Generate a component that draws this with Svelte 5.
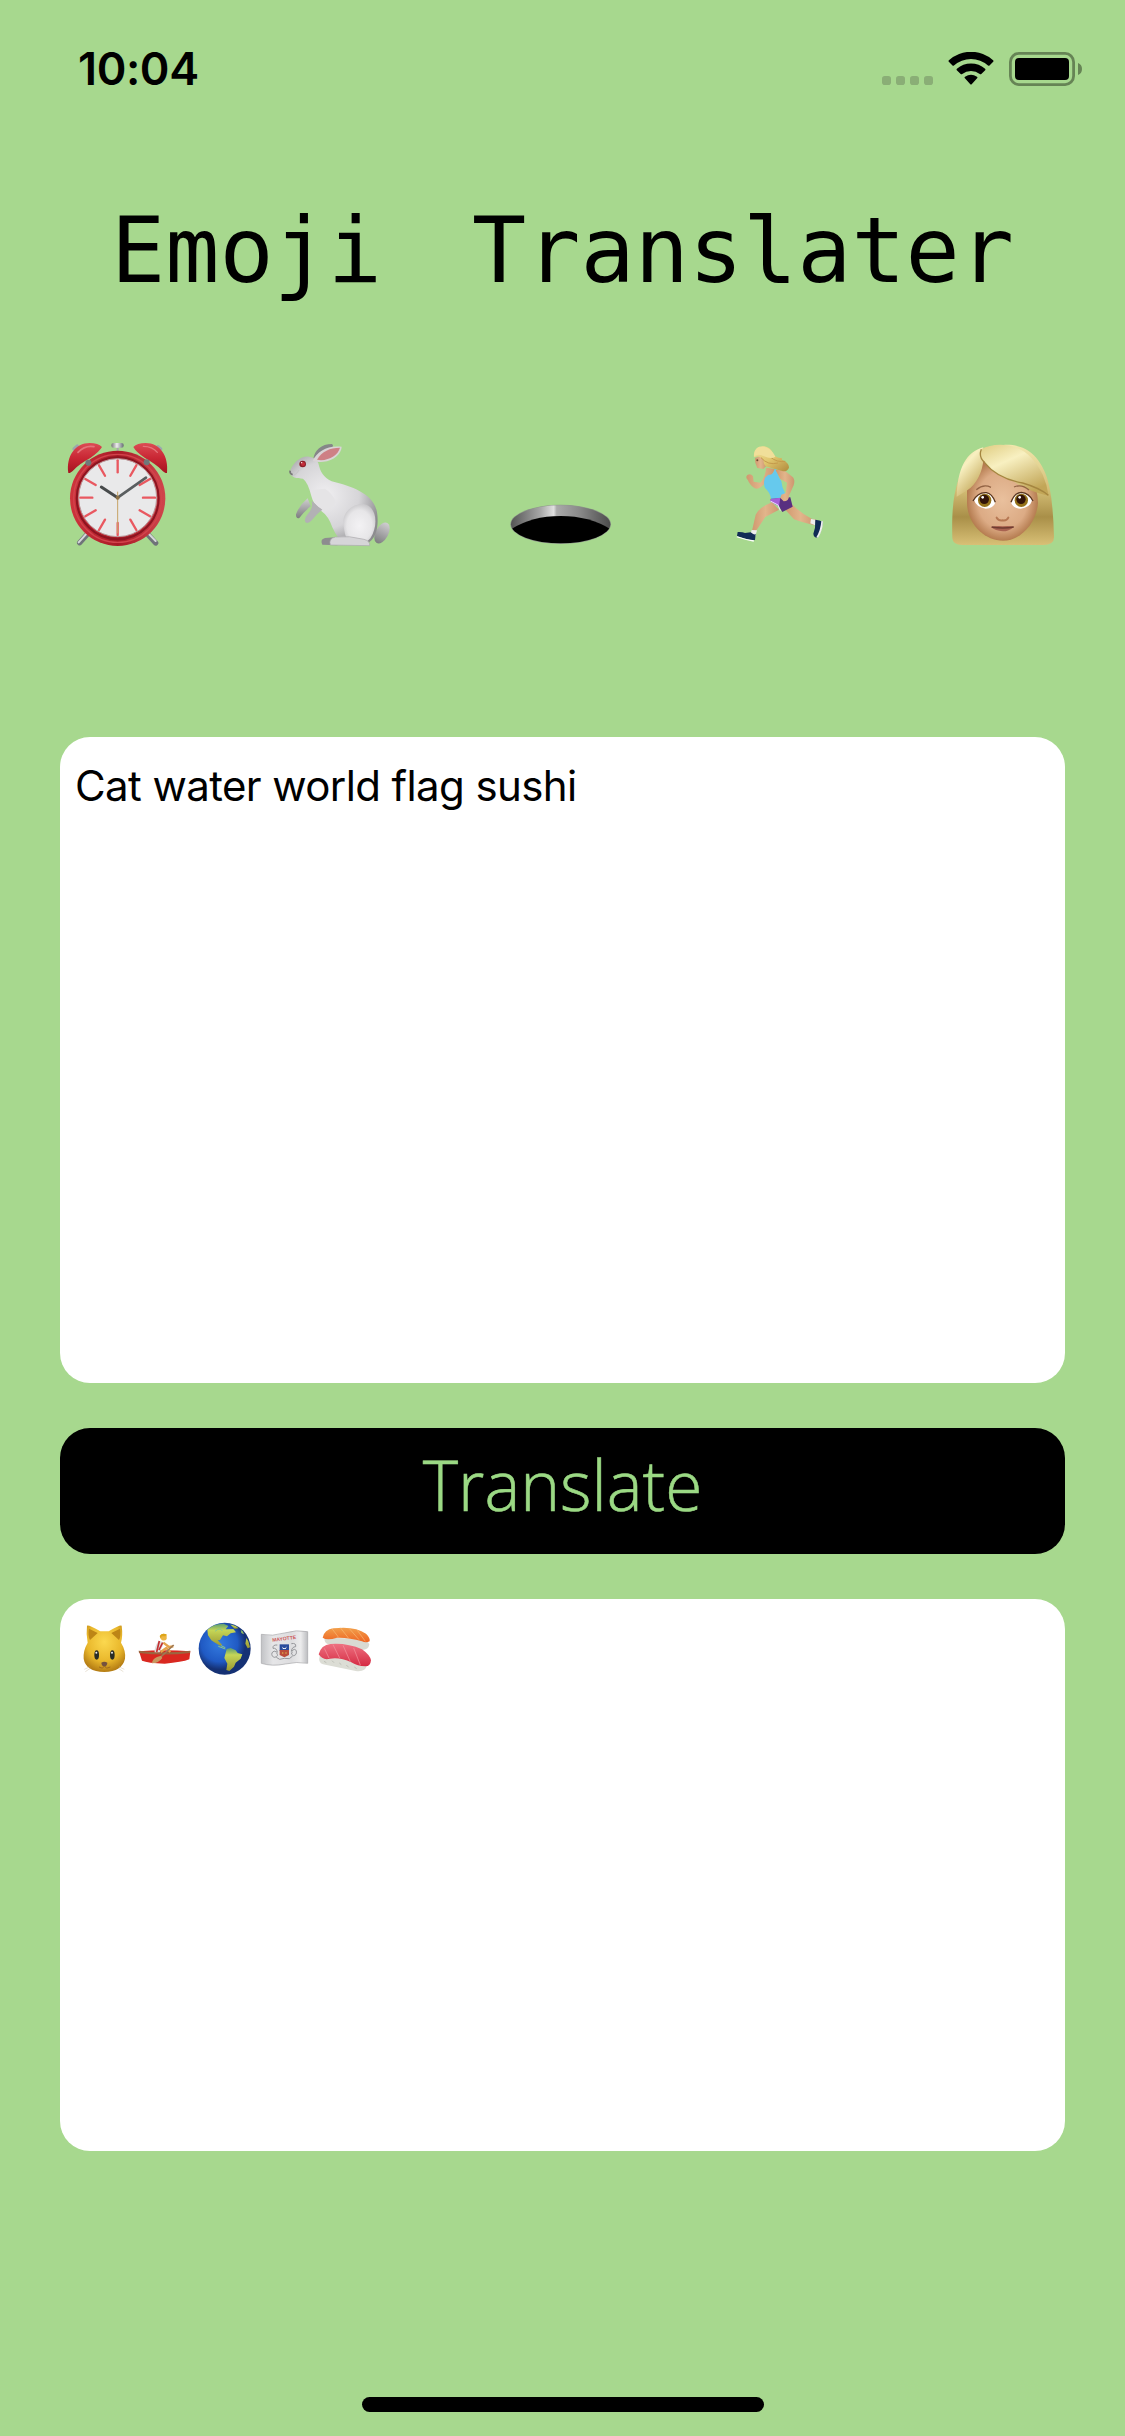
<script>
  let source = $state('Cat water world flag sushi');
  const ticks = [0, 30, 60, 90, 120, 150, 180, 210, 240, 270, 300, 330];
</script>

<main class="screen">
  <header class="status">
    <span class="time">10:04</span>
    <div class="indicators">
      <svg class="signal" viewBox="0 0 52 9">
        <rect x="0" width="9" height="9" rx="2.800" />
        <rect x="14" width="9" height="9" rx="2.800" />
        <rect x="28" width="9" height="9" rx="2.800" />
        <rect x="42" width="9" height="9" rx="2.800" />
      </svg>
      <svg class="wifi" viewBox="0 0 46 34.500" preserveAspectRatio="none">
        <path d="M.8 10.200Q0 9.400.9 8.600A32 32 0 0 1 45.100 8.600Q46 9.400 45.200 10.200L41.500 14Q40.800 14.700 40 14A25 25 0 0 0 6 14Q5.200 14.700 4.500 14Z" />
        <path d="M8.800 19Q8.100 18.200 8.900 17.500A21 21 0 0 1 37.100 17.500Q37.900 18.200 37.200 19L33.300 23Q32.600 23.600 31.800 23A14 14 0 0 0 14.200 23Q13.400 23.600 12.700 23Z" />
        <path d="M16.700 27.200Q16.200 26.500 17 26A10 10 0 0 1 29 26Q29.800 26.500 29.300 27.200L23.700 33.700Q23 34.400 22.300 33.700Z" />
      </svg>
      <svg class="battery" viewBox="0 0 74 34">
        <rect x="1.400" y="1.400" width="63.200" height="31.200" rx="8.500" fill="none" stroke="#668455" stroke-width="2.800" />
        <rect x="6" y="6" width="54" height="22" rx="4" />
        <path d="M69 11Q73 12.500 73 17T69 23Z" fill="#668455" />
      </svg>
    </div>
  </header>

  <h1>Emoji Translater</h1>

  <section class="hero" aria-label="Emoji">
    <!-- Alarm clock -->
    <svg viewBox="6 0 390 390">
      <defs>
        <linearGradient id="bell" x1="0" y1="0" x2="0" y2="1"><stop offset="0" stop-color="#dc4c54" /><stop offset=".5" stop-color="#c92734" /><stop offset="1" stop-color="#a51420" /></linearGradient>
        <linearGradient id="rim" x1="0" y1="0" x2="1" y2="0"><stop offset="0" stop-color="#cf343d" /><stop offset=".5" stop-color="#a91a26" /><stop offset="1" stop-color="#d0454c" /></linearGradient>
        <linearGradient id="steel"><stop offset="0" stop-color="#777" /><stop offset=".45" stop-color="#eee" /><stop offset="1" stop-color="#646b72" /></linearGradient>
      </defs>
      <path d="M118 306L89 338M287 306L317 339" stroke="#6f7479" stroke-width="16" stroke-linecap="round" />
      <path d="M114 306L86 337M291 306L317 333" stroke="#d5d8da" stroke-width="6" stroke-linecap="round" />
      <path d="M72 57L82 48M332 57L324 50" stroke="#9aa7ad" stroke-width="10" stroke-linecap="round" />
      <path d="M203 45V75" stroke="#aaa" stroke-width="6" />
      <rect x="184" y="39" width="37" height="14" rx="6" fill="url(#steel)" />
      <circle cx="203" cy="205" r="143" fill="url(#rim)" />
      <circle cx="203" cy="205" r="132" fill="none" stroke="#d2444c" stroke-width="4" />
      <circle cx="203" cy="205" r="123" fill="none" stroke="#8c1420" stroke-width="6" />
      <circle cx="203" cy="203" r="117" fill="#e9e9ea" stroke="#b99a9c" stroke-width="3" />
      <path d="M55 129C48 78 76 39 119 39Q145 39 156 51Q148 65 121 84Q88 102 72 119Q61 130 55 129Z" fill="url(#bell)" />
      <path d="M351 129C357 78 330 39 287 39Q261 39 250 51Q258 66 285 84Q318 103 334 119Q345 130 351 129Z" fill="url(#bell)" />
      <path d="M84 67Q105 45 132 50" stroke="#e4757a" stroke-width="5" fill="none" stroke-linecap="round" />
      <path d="M280 49Q307 49 322 67" stroke="#e4757a" stroke-width="4" fill="none" stroke-linecap="round" />
      <circle cx="115" cy="98" r="9" fill="#70777a" /><circle cx="290" cy="97" r="9" fill="#70777a" />
      {#each ticks as angle}
        <path d="M203 91V127" stroke="#e95860" stroke-width="7" stroke-linecap="round" transform="rotate({angle} 203 203)" />
      {/each}
      <path d="M203 203L154 171" stroke="#474a4b" stroke-width="9" stroke-linecap="round" />
      <path d="M203 203L288 143" stroke="#5a5e60" stroke-width="8" stroke-linecap="round" />
      <path d="M203 185V310" stroke="#c6a365" stroke-width="3" />
      <circle cx="203" cy="203" r="6" fill="#8c7045" />
    </svg>

    <!-- Rabbit -->
    <svg viewBox="-3 0 390 390">
      <defs>
        <radialGradient id="fur" cx=".4" cy=".45" r=".65"><stop offset="0" stop-color="#f0eff1" /><stop offset=".6" stop-color="#d6d5d8" /><stop offset="1" stop-color="#8d8c8f" /></radialGradient>
        <radialGradient id="haunch" cx=".5" cy=".55" r=".6"><stop offset="0" stop-color="#f3f2f4" /><stop offset=".65" stop-color="#e7e6e8" /><stop offset="1" stop-color="#c2c1c4" /></radialGradient>
        <linearGradient id="paw" x1="0" y1="0" x2="0" y2="1"><stop offset="0" stop-color="#d0cfd1" /><stop offset="1" stop-color="#7d7d7f" /></linearGradient>
      </defs>
      <ellipse cx="321" cy="309" rx="19" ry="34" transform="rotate(28 321 309)" fill="url(#paw)" />
      <path d="M115 88C118 60 139 42 171 42Q180 48 163 60L129 91Z" fill="#858688" />
      <path d="M98 205Q72 227 63 253Q62 267 73 264Q86 246 107 229Z" fill="url(#paw)" />
      <path d="M142 344Q134 328 150 324L190 321L187 346Z" fill="#8d8d8f" />
      <path d="M130 100C136 126 145 142 170 154C233 170 296 191 306 247C312 288 304 323 282 337H211C191 331 182 312 172 292Q161 258 138 242Q116 226 109 198Q99 157 84 146C67 146 46 143 45 126C51 102 75 77 102 80Q124 83 130 100Z" fill="url(#fur)" />
      <path d="M206 287C199 249 231 220 266 222C303 228 313 281 286 325L271 340L219 333C211 320 208 306 206 287Z" fill="url(#haunch)" />
      <path d="M166 345Q160 326 181 321Q223 316 267 328Q286 333 284 347Z" fill="#d6d5d8" stroke="#aaa9ac" stroke-width="2" />
      <path d="M110 212Q116 234 99 251Q86 265 91 276Q99 284 111 270Q130 247 142 239" fill="#b2b1b4" />
      <path d="M108 180Q114 229 145 238Q177 241 182 215Q173 190 150 176Z" fill="#e5e4e6" />
      <path d="M113 93C127 62 159 45 200 50C200 70 176 93 145 95Q122 97 113 93Z" fill="#d9d4d6" />
      <path d="M126 89C141 64 164 53 195 53C189 75 166 88 138 91Z" fill="#ce8085" />
      <circle cx="83" cy="102" r="10" fill="#8c2029" /><circle cx="84" cy="102" r="6" fill="#c52e3b" /><circle cx="80" cy="98" r="2" fill="#fff" />
      <path d="M45 122Q44 132 53 134" stroke="#777" stroke-width="5" fill="none" />
      <path d="M55 137Q67 131 72 120" stroke="#c1bfc2" stroke-width="2" fill="none" />
    </svg>

    <!-- Hole -->
    <svg viewBox="-12 0 390 390">
      <defs>
        <linearGradient id="ring"><stop offset="0" stop-color="#555" /><stop offset=".3" stop-color="#a8a8a8" /><stop offset=".43" stop-color="#e0e0e0" /><stop offset=".46" stop-color="#aaa" /><stop offset=".7" stop-color="#888" /><stop offset="1" stop-color="#4c4c4c" /></linearGradient>
        <clipPath id="opening"><ellipse cx="182" cy="283" rx="149" ry="57" /></clipPath>
      </defs>
      <ellipse cx="182" cy="283" rx="151" ry="59" fill="#8e9989" />
      <ellipse cx="182" cy="283" rx="149" ry="57" fill="url(#ring)" />
      <path d="M25 303Q90 258 182 258T340 303V350H25Z" clip-path="url(#opening)" />
    </svg>

    <!-- Runner -->
    <svg viewBox="-6 0 390 390">
      <defs>
        <linearGradient id="hair" x1="0" y1="0" x2="1" y2="1"><stop offset="0" stop-color="#f4e5a0" /><stop offset=".5" stop-color="#e0c56d" /><stop offset="1" stop-color="#b08a3c" /></linearGradient>
        <linearGradient id="skin"><stop offset="0" stop-color="#d0986f" /><stop offset=".5" stop-color="#e2b58b" /><stop offset="1" stop-color="#cd966f" /></linearGradient>
      </defs>
      <path d="M139 113Q134 145 121 158L101 155L99 139Q92 129 82 135Q75 142 84 151Q88 164 103 174Q112 179 123 171L147 149L166 117Z" fill="url(#skin)" />
      <path d="M105 84L106 98L112 114L130 117L139 108L131 74Z" fill="url(#skin)" />
      <path d="M156 217Q116 233 107 254L96 302L106 306L136 261L177 239Z" fill="url(#skin)" />
      <path d="M194 237L215 222Q240 248 275 266L289 269L283 286Q240 275 222 268Z" fill="url(#skin)" />
      <path d="M95 300L111 301L106 319L91 313Z" fill="#eee" />
      <path d="M273 267L287 269L285 286L271 280Z" fill="#eee" />
      <path d="M53 306Q67 305 75 309L92 307Q103 317 107 311L105 330Q91 333 51 318Z" fill="#122d56" />
      <path d="M51 319Q75 328 102 331L101 335Q74 330 50 322Z" fill="#fff" />
      <path d="M286 269Q299 271 308 275Q306 303 292 323Q281 323 280 311L285 293Z" fill="#102b55" />
      <path d="M304 273L309 274Q308 304 294 323L289 322Q302 300 304 273Z" fill="#eee" />
      <path d="M153 205L211 202L218 230L187 246L177 229L151 214Z" fill="#583080" />
      <path d="M153 206L181 203L177 229L151 214Z" fill="#a55fda" />
      <path d="M151 213L174 225L181 242" stroke="#f4dbff" stroke-width="3" fill="none" />
      <path d="M145 134Q160 136 164 116L172 120Q173 139 184 153Q185 173 196 191L193 202L153 206Q150 187 135 174Q129 160 135 143Z" fill="#66c9ed" />
      <path d="M167 121Q178 114 198 125L219 142Q226 151 221 166L207 197Q207 214 191 214L181 204L184 194L197 189L201 158L181 147Z" fill="url(#skin)" />
      <path d="M102 82C99 57 116 45 138 50C155 53 159 74 166 79Q177 87 187 83Q180 90 194 93Q207 101 207 113Q202 125 189 124Q160 116 137 109Q129 100 131 91Q121 75 102 82Z" fill="url(#hair)" />
      <path d="M123 83Q144 107 174 99M151 81Q170 98 196 94" stroke="#c59b4c" stroke-width="3" fill="none" />
      <path d="M102 79Q115 69 132 79Q153 88 166 80C151 44 106 37 102 79Z" fill="#f0df9a" />
      <circle cx="112" cy="91" r="3" fill="#70442f" />
    </svg>

    <!-- Woman's face -->
    <svg viewBox="15 0 390 390">
      <defs>
        <linearGradient id="mane" x1="0" y1="0" x2="0" y2="1"><stop offset="0" stop-color="#f2e7ad" /><stop offset=".45" stop-color="#d3bd75" /><stop offset=".72" stop-color="#a98f48" /><stop offset="1" stop-color="#d8c076" /></linearGradient>
        <radialGradient id="face"><stop offset="0" stop-color="#e9c09d" /><stop offset=".7" stop-color="#dcab85" /><stop offset="1" stop-color="#b57c50" /></radialGradient>
        <linearGradient id="fringe" x1="0" y1="0" x2=".6" y2="1"><stop offset="0" stop-color="#dfcc81" /><stop offset=".4" stop-color="#f8f0c1" /><stop offset="1" stop-color="#c2a657" /></linearGradient>
      </defs>
      <path d="M205 45C286 39 329 98 344 174Q355 231 357 322Q357 345 325 345H82Q53 345 52 324C50 249 54 198 69 153C90 84 139 43 205 45Z" fill="url(#mane)" />
      <path d="M96 180Q98 119 151 89H248Q306 137 309 218C306 275 260 332 204 332C147 332 97 281 96 218Z" fill="url(#face)" />
      <path d="M145 52C95 65 68 112 65 200Q82 190 98 180C123 164 144 126 145 87Q136 75 145 52Z" fill="url(#fringe)" />
      <path d="M139 58C178 36 249 38 290 85Q330 126 341 198Q270 181 236 154Q171 134 144 88Q134 73 139 58Z" fill="url(#fringe)" />
      <path d="M139 58Q130 80 148 97Q187 146 263 159Q317 175 340 196" stroke="#a58640" stroke-width="4" fill="none" />
      <path d="M124 179Q145 161 168 172M237 171Q260 161 282 180" stroke="#926344" stroke-width="4" fill="none" />
      <path d="M117 210Q131 189 151 189Q171 190 181 218Q175 235 152 236Q124 232 117 210Z" fill="#fff" />
      <path d="M228 218Q236 190 257 189Q281 190 292 210Q284 234 257 236Q236 236 228 218Z" fill="#fff" />
      <g fill="#94721a"><circle cx="149" cy="211" r="20" /><circle cx="259" cy="211" r="20" /></g>
      <g fill="#321409"><circle cx="148" cy="208" r="14" /><circle cx="258" cy="208" r="14" /></g>
      <g fill="#fff"><circle cx="143" cy="202" r="4" /><circle cx="254" cy="202" r="4" /></g>
      <path d="M114 213Q129 186 154 188Q171 190 181 217M228 217Q238 188 259 187Q282 189 294 213" stroke="#58351f" stroke-width="4" fill="none" />
      <path d="M185 263Q191 273 203 271Q215 273 220 263" stroke="#b67853" stroke-width="6" fill="none" stroke-linecap="round" />
      <path d="M168 291Q187 286 203 289Q220 286 238 290Q221 304 203 304Q181 302 168 291Z" fill="#a86250" />
      <path d="M170 291Q204 297 236 291" stroke="#703c31" stroke-width="4" fill="none" />
    </svg>
  </section>

  <textarea class="panel input" bind:value={source} spellcheck="false" aria-label="Text to translate"></textarea>
  <button type="button"><span>Translate</span></button>

  <section class="panel output" aria-label="Translation">
    <!-- Cat face -->
    <svg viewBox="75 90 180 180">
      <defs><radialGradient id="cat" cx=".5" cy=".35" r=".65"><stop offset="0" stop-color="#fbd84f" /><stop offset=".65" stop-color="#e9b72b" /><stop offset="1" stop-color="#b57d14" /></radialGradient></defs>
      <path d="M111 107Q115 103 151 124H176Q211 103 215 107Q219 137 213 158Q228 182 225 206Q217 244 163 246Q107 244 101 206Q99 182 113 158Q108 131 111 107Z" fill="url(#cat)" />
      <path d="M117 116Q113 137 120 150L143 129ZM210 116Q214 137 207 150L184 129Z" fill="#bd8516" />
      <ellipse cx="140" cy="195" rx="7" ry="14" fill="#292c26" /><ellipse cx="187" cy="195" rx="7" ry="14" fill="#292c26" />
      <circle cx="139" cy="188" r="3" fill="#eee" /><circle cx="186" cy="188" r="3" fill="#eee" />
      <path d="M154 218Q163 213 172 218Q171 229 163 230Q155 228 154 218Z" fill="#75523e" />
      <path d="M147 231Q158 239 163 229Q169 239 181 231" stroke="#a26d1e" stroke-width="3" fill="none" />
      <path d="M118 231L103 238M121 235L106 245M208 231L223 238M205 235L220 245" stroke="#ddd3c1" stroke-width="2" />
    </svg>

    <!-- Rowing boat -->
    <svg viewBox="255 90 180 180">
      <path d="M267 184Q343 177 421 184L418 208Q396 217 344 221Q293 219 276 212Z" fill="#d92820" />
      <path d="M266 182Q345 192 421 182L420 189Q342 198 267 189Z" fill="#9c653f" />
      <path d="M326 152L341 157L337 170L329 187H314Q312 171 326 152Z" fill="#ddd" />
      <path d="M328 153L320 186M338 158L327 180" stroke="#c32f31" stroke-width="5" />
      <path d="M340 158L357 171L370 169M332 186L349 174L361 186" stroke="#e4a24b" stroke-width="7" fill="none" stroke-linejoin="round" />
      <path d="M331 137Q338 128 350 134L350 147Q344 155 334 149Z" fill="#edb643" />
      <path d="M329 138Q335 127 350 133L346 139H335L332 147Z" fill="#dda519" />
      <path d="M371 165L329 204" stroke="#9e7954" stroke-width="5" />
      <path d="M333 197L337 204Q324 221 306 220Q306 208 321 201Z" fill="#c99760" />
    </svg>

    <!-- Globe -->
    <svg viewBox="435 90 180 180">
      <defs>
        <radialGradient id="ocean" cx=".4" cy=".4"><stop offset="0" stop-color="#347ce0" /><stop offset=".7" stop-color="#205ac4" /><stop offset="1" stop-color="#153174" /></radialGradient>
        <linearGradient id="land" x1="0" y1="0" x2="0" y2="1"><stop offset="0" stop-color="#5b9c72" /><stop offset=".3" stop-color="#c5d657" /><stop offset="1" stop-color="#9c9931" /></linearGradient>
      </defs>
      <circle cx="524" cy="176" r="78" fill="url(#ocean)" />
      <g fill="url(#land)">
        <path d="M472 119Q491 100 521 101L535 108L527 118L550 117L558 127L542 130L531 139L519 136L510 150L503 151L516 164L512 168L493 157L484 151L474 136Z" />
        <path d="M530 177L542 174L557 181L563 189L577 193L572 206L557 218L552 230L538 243L529 240L532 221L523 204Z" />
        <path d="M589 144L595 154L600 172L593 175L586 161ZM572 119L578 123L582 133L574 129Z" />
        <path d="M540 103L557 108L566 115L554 116Z" />
      </g>
      <path d="M495 124Q510 111 517 123M513 167L526 173M505 169L526 177" stroke="#8bc68a" stroke-width="3" fill="none" />
    </svg>

    <!-- Mayotte flag -->
    <svg viewBox="615 90 180 180">
      <defs><linearGradient id="cloth"><stop offset="0" stop-color="#c2c3c6" /><stop offset=".25" stop-color="#e6e6e8" /><stop offset=".65" stop-color="#dddddf" /><stop offset=".85" stop-color="#ececed" /><stop offset="1" stop-color="#bcbdc0" /></linearGradient></defs>
      <path d="M634 133Q667 140 703 129Q739 118 773 125V220Q740 214 706 222Q666 230 634 220Z" fill="url(#cloth)" stroke="#a4a5a8" stroke-width="2" />
      <text x="703" y="151" class="flag-name" text-anchor="middle" transform="rotate(-7 703 151)">MAYOTTE</text>
      <path d="M689 163H717V183H689Z" fill="#284b9b" /><path d="M689 180H717V195L703 202L689 195Z" fill="#bb4c39" />
      <path d="M695 169Q703 181 711 169L707 177H699Z" fill="#fff" />
      <path d="M696 189H700M706 189H710" stroke="#d7a74a" stroke-width="4" />
      <path d="M682 165Q667 164 669 175Q680 173 682 187Q671 179 666 188Q663 200 674 202Q687 199 680 189M724 161Q739 158 737 170Q726 170 724 184Q735 173 739 183Q741 196 730 197Q720 193 727 185M679 202L689 208L703 205L718 206L728 198" fill="none" stroke="#96979b" stroke-width="3" />
    </svg>

    <!-- Sushi -->
    <svg viewBox="795 90 180 180">
      <defs>
        <linearGradient id="salmon" x1="0" y1="0" x2="0" y2="1"><stop offset="0" stop-color="#f2a04b" /><stop offset="1" stop-color="#ee6423" /></linearGradient>
        <linearGradient id="tuna" x1="0" y1="0" x2="0" y2="1"><stop offset="0" stop-color="#ee7181" /><stop offset="1" stop-color="#d52b43" /></linearGradient>
      </defs>
      <path d="M823 143Q823 165 844 163L936 180Q956 180 958 163L947 146Z" fill="#d9dad2" />
      <path d="M818 143Q823 119 850 115Q915 107 948 131Q961 143 959 154Q948 160 936 154Q897 142 861 143Q831 153 818 143Z" fill="url(#salmon)" />
      <path d="M846 116L865 141M871 113L896 145M899 117L927 149M922 121L946 154" stroke="#f8ba77" stroke-width="2" />
      <path d="M809 198Q803 218 819 223L917 243Q946 247 951 226L942 211L850 193Z" fill="#dcddd5" />
      <path d="M806 193Q814 164 841 162Q891 158 936 178Q960 195 963 211Q961 230 946 229Q923 229 904 217Q870 201 840 206Q818 212 806 193Z" fill="url(#tuna)" />
      <path d="M823 175L837 204M849 164L869 204M879 166L901 215M911 174L931 225" stroke="#f397a0" stroke-width="2" />
      <path d="M822 214L829 218M846 212L852 218M868 219L874 224M889 225L896 232M913 231L920 236" stroke="#bfc0b7" stroke-width="3" />
    </svg>
  </section>

  <div class="home"></div>
</main>

<style>
  :global(body) { background: #a7d88e; }
  .screen {
    box-sizing: border-box;
    width: 1125px;
    height: 2436px;
    display: flex;
    flex-direction: column;
    background: #a7d88e;
    font-family: Inter, "Liberation Sans", sans-serif;
    color: #000;
    overflow: hidden;
  }
  svg { display: block; flex: none; }
  .status {
    flex: none;
    height: 146px;
    box-sizing: border-box;
    padding: 52px 42px 0 78px;
    display: flex;
    justify-content: space-between;
    align-items: flex-start;
  }
  .time { font-size: 45px; line-height: 34px; font-weight: 600; letter-spacing: -.4px; }
  .indicators { display: flex; height: 34px; }
  .signal { width: 52px; height: 9px; fill: #8aae76; margin: 24px 14px 0 0; }
  .wifi { width: 46px; height: 33px; margin-right: 15px; }
  .battery { width: 74px; height: 34px; }
  h1 {
    flex: none;
    margin: 0;
    height: 210px;
    text-align: center;
    font: 400 90px/210px "DejaVu Sans Mono", monospace;
    word-spacing: 36px;
    white-space: nowrap;
  }
  .hero {
    flex: none;
    box-sizing: border-box;
    height: 381px;
    padding: 74px 0 0 52px;
    display: flex;
    gap: 92px;
  }
  .hero svg { width: 130px; height: 130px; }
  .panel { flex: none; box-sizing: border-box; margin: 0 60px; background: #fff; border-radius: 30px; }
  .input {
    height: 646px;
    border: 0;
    padding: 24px 15px;
    resize: none;
    outline: none;
    font: 400 42px/50px Inter, "Liberation Sans", sans-serif;
    letter-spacing: -.6px;
    color: #000;
  }
  button {
    flex: none;
    height: 126px;
    margin: 45px 60px;
    padding: 0 0 14px;
    border: 0;
    border-radius: 30px;
    background: #000;
    color: #9bd984;
    font: 300 70px/112px "Open Sans", "Noto Sans", sans-serif;
    -webkit-text-stroke: .6px #9bd984;
  }
  button span { display: block; transform: scaleX(.965); }
  .output { height: 552px; display: flex; padding: 21px 15px; }
  .output svg { width: 60px; height: 60px; }
  .flag-name { font: 700 15px "Liberation Sans", sans-serif; fill: #ce5858; }
  .home { flex: none; width: 402px; height: 15px; border-radius: 8px; background: #000; margin: 246px auto 0; }
</style>
